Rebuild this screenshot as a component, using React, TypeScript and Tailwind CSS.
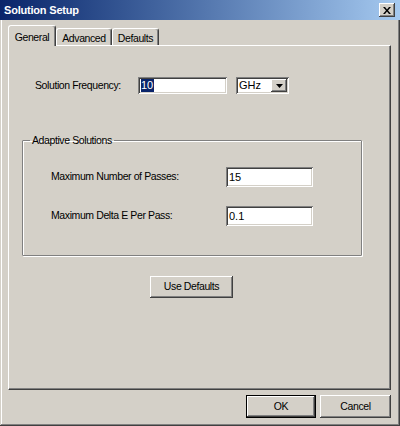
import React from "react";

const raised =
  "bg-[#d4d0c8] shadow-[inset_-1px_-1px_#404040,inset_1px_1px_#ffffff,inset_-2px_-2px_#808080,inset_2px_2px_#d4d0c8]";
const sunken =
  "bg-white shadow-[inset_1px_1px_#808080,inset_-1px_-1px_#ffffff,inset_2px_2px_#404040,inset_-2px_-2px_#d4d0c8]";

function TextBox({ value, width, height, selected }: { value: string; width: string; height: string; selected?: boolean }) {
  return (
    <div className={`${sunken} ${width} ${height} flex items-center pl-[3px] text-[11px] tracking-normal`}>
      {selected ? (
        <span className="bg-[#0a246a] text-white leading-[13px] pr-[1px]">{value}</span>
      ) : (
        <span>{value}</span>
      )}
    </div>
  );
}

export default function App() {
  const tabs = [
    { label: "General", w: "w-[48px]", active: true },
    { label: "Advanced", w: "w-[56px]", active: false },
    { label: "Defaults", w: "w-[47px]", active: false },
  ];

  return (
    <div
      className="w-[400px] h-[426px] bg-[#d4d0c8] flex flex-col text-[10.5px] tracking-[-0.4px] text-black shadow-[inset_-1px_-1px_#404040,inset_1px_1px_#d4d0c8,inset_-2px_-2px_#808080,inset_2px_2px_#ffffff]"
      style={{ fontFamily: '"Liberation Sans", Arial, sans-serif' }}
    >
      {/* Title bar */}
      <div className="h-[20px] flex items-center justify-between pl-[4px] pr-[5px] bg-gradient-to-r from-[#0a246a] to-[#a6caf0]">
        <span className="text-white font-bold text-[11px] tracking-[-0.2px]">Solution Setup</span>
        <button className={`${raised} w-[16px] h-[14px] flex items-center justify-center`}>
          <svg width="8" height="7" viewBox="0 0 8 7">
            <path d="M0 0h2l2 2.5L6 0h2L5 3.5 8 7H6L4 4.5 2 7H0l3-3.5z" fill="#000" />
          </svg>
        </button>
      </div>

      {/* Tabs */}
      <div className="flex items-end h-[25px] pl-[8px]">
        {tabs.map((t) =>
          t.active ? (
            <div
              key={t.label}
              className={`${t.w} h-[21px] -mb-[1px] relative z-10 bg-[#d4d0c8] rounded-t-[3px] border-t border-l border-white border-r border-r-[#404040] shadow-[inset_-1px_0_#808080] flex items-start justify-center pt-[4px]`}
            >
              {t.label}
            </div>
          ) : (
            <div
              key={t.label}
              className={`${t.w} h-[17px] bg-[#d4d0c8] rounded-t-[3px] border-t border-l border-white border-r border-r-[#404040] shadow-[inset_-1px_0_#808080] flex items-start justify-center pt-[2px]`}
            >
              {t.label}
            </div>
          )
        )}
      </div>

      {/* Tab panel */}
      <div className="ml-[8px] mr-[9px] h-[345px] border-t border-l border-white border-r border-b border-r-[#404040] border-b-[#404040] shadow-[inset_-1px_-1px_#808080] flex flex-col">
        <div className="flex items-center mt-[31px] h-[17px]">
          <span className="ml-[26px] w-[103px]">Solution Frequency:</span>
          <TextBox value="10" width="w-[89px]" height="h-[17px]" selected />
          <div className={`${sunken} ml-[9px] w-[53px] h-[17px] flex items-center justify-between pl-[3px] pr-[2px] text-[11px] tracking-normal`}>
            <span>GHz</span>
            <div className={`${raised} w-[16px] h-[13px] flex items-center justify-center`}>
              <svg width="7" height="4" viewBox="0 0 7 4">
                <path d="M0 0h7L3.5 4z" fill="#000" />
              </svg>
            </div>
          </div>
        </div>

        <fieldset className="ml-[13px] w-[340px] h-[122px] mt-[40px] border border-[#808080] shadow-[inset_1px_1px_#ffffff,1px_1px_#ffffff] rounded-[1px] px-[28px]">
          <legend className="ml-[-21px] px-[2px] leading-[12px]">Adaptive Solutions</legend>
          <div className="flex items-center mt-[21px] h-[20px]">
            <span className="w-[175px]">Maximum Number of Passes:</span>
            <TextBox value="15" width="w-[87px]" height="h-[20px]" />
          </div>
          <div className="flex items-center mt-[19px] h-[20px]">
            <span className="w-[175px]">Maximum Delta E Per Pass:</span>
            <TextBox value="0.1" width="w-[87px]" height="h-[20px]" />
          </div>
        </fieldset>

        <button className={`${raised} ml-[141px] mt-[20px] w-[83px] h-[22px] flex items-center justify-center`}>
          Use Defaults
        </button>
      </div>

      {/* Bottom buttons */}
      <div className="flex justify-end gap-[4px] mr-[9px] mt-[5px]">
        <button className="w-[70px] h-[23px] border border-black flex">
          <span className={`${raised} flex-1 flex items-center justify-center`}>OK</span>
        </button>
        <button className={`${raised} w-[71px] h-[23px] flex items-center justify-center`}>Cancel</button>
      </div>
    </div>
  );
}
